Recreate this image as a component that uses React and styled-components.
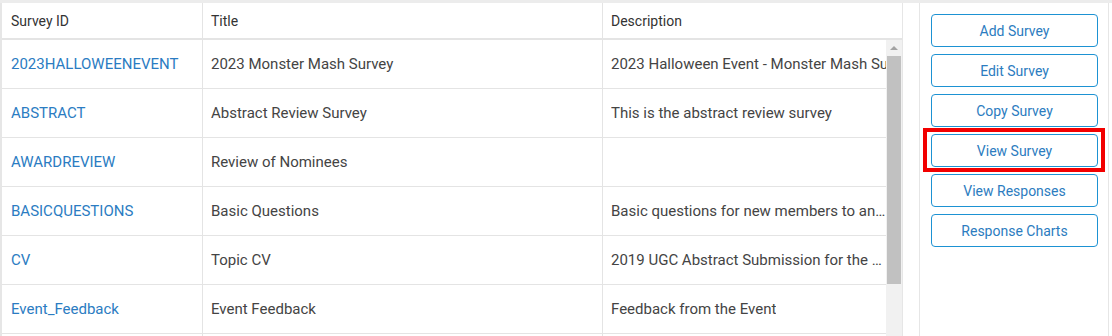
import React from "react";
import styled, { createGlobalStyle } from "styled-components";

const GlobalStyle = createGlobalStyle`
  body {
    margin: 0;
    background: #fff;
    font-family: Roboto, "Liberation Sans", sans-serif;
    font-size: 14px;
  }
`;

const Page = styled.div`
  display: flex;
  height: 336px;
  border-top: 3px solid #ececec;
  box-sizing: border-box;
  overflow: hidden;
`;

const TablePanel = styled.div`
  width: 903px;
  flex-shrink: 0;
  border-left: 2px solid #e6e6e6;
  border-right: 1px solid #e6e6e6;
  box-sizing: border-box;
  display: flex;
  flex-direction: column;
`;

const HeaderRow = styled.div`
  display: grid;
  grid-template-columns: 201px 400px 1fr;
  height: 35px;
  flex-shrink: 0;
  border-bottom: 2px solid #e4e4e4;
`;

const HeaderCell = styled.div`
  display: flex;
  align-items: center;
  padding-left: ${(p) => p.$pad || 8}px;
  color: #333;
  border-right: ${(p) => (p.$last ? "none" : "1px solid #e4e4e4")};
`;

const Body = styled.div`
  display: flex;
  flex: 1;
  min-height: 0;
`;

const Rows = styled.div`
  flex: 1;
  min-width: 0;
  overflow: hidden;
`;

const Row = styled.div`
  display: grid;
  grid-template-columns: 201px 400px 1fr;
  height: 49px;
  border-bottom: 1px solid #e4e4e4;
  box-sizing: border-box;
`;

const Cell = styled.div`
  display: flex;
  align-items: center;
  padding-left: ${(p) => p.$pad || 8}px;
  font-size: 15px;
  color: ${(p) => (p.$link ? "#2b7cc2" : "#444")};
  border-right: ${(p) => (p.$last ? "none" : "1px solid #e4e4e4")};
  min-width: 0;
`;

const Clip = styled.span`
  white-space: nowrap;
  overflow: hidden;
  text-overflow: ${(p) => (p.$cut ? "clip" : "ellipsis")};
  display: block;
`;

const Scrollbar = styled.div`
  width: 16px;
  background: #f1f1f1;
  display: flex;
  flex-direction: column;
  align-items: center;
  flex-shrink: 0;
`;

const Arrow = styled.div`
  margin-top: 6px;
  width: 0;
  height: 0;
  border-left: 4px solid transparent;
  border-right: 4px solid transparent;
  border-bottom: 4px solid #a3a3a3;
`;

const Thumb = styled.div`
  margin-top: 6px;
  width: 14px;
  height: 228px;
  background: #c1c1c1;
`;

const Gap = styled.div`
  width: 16px;
  flex-shrink: 0;
`;

const SidePanel = styled.div`
  width: 190px;
  flex-shrink: 0;
  border-left: 1px solid #e6e6e6;
  border-right: 1px solid #e6e6e6;
  box-sizing: border-box;
  padding: 11px 10px 0 11px;
  display: flex;
  flex-direction: column;
  gap: 7px;
`;

const ActionButton = styled.button`
  position: relative;
  height: 33px;
  width: 167px;
  background: #fff;
  border: 1px solid #1d92d3;
  border-radius: 4px;
  color: #2c7cc0;
  font-family: Roboto, "Liberation Sans", sans-serif;
  font-size: 14px;
  cursor: pointer;

  &::after {
    content: "";
    display: ${(p) => (p.$highlight ? "block" : "none")};
    position: absolute;
    top: -7px;
    bottom: -6px;
    left: -9px;
    right: -8px;
    border: 4px solid #f20000;
  }
`;

const surveys = [
  ["2023HALLOWEENEVENT", "2023 Monster Mash Survey", "2023 Halloween Event - Monster Mash Survey", true],
  ["ABSTRACT", "Abstract Review Survey", "This is the abstract review survey"],
  ["AWARDREVIEW", "Review of Nominees", ""],
  ["BASICQUESTIONS", "Basic Questions", "Basic questions for new members to answer"],
  ["CV", "Topic CV", "2019 UGC Abstract Submission for the Conference"],
  ["Event_Feedback", "Event Feedback", "Feedback from the Event"],
  ["FEEDBACK", "General Feedback", "General feedback"],
];

const actions = [
  "Add Survey",
  "Edit Survey",
  "Copy Survey",
  "View Survey",
  "View Responses",
  "Response Charts",
];

export default function App() {
  return (
    <>
      <GlobalStyle />
      <Page>
        <TablePanel>
          <HeaderRow>
            <HeaderCell $pad={9}>Survey ID</HeaderCell>
            <HeaderCell>Title</HeaderCell>
            <HeaderCell $last>Description</HeaderCell>
          </HeaderRow>
          <Body>
            <Rows>
              {surveys.map(([id, title, desc, cut]) => (
                <Row key={id}>
                  <Cell $pad={9} $link>{id}</Cell>
                  <Cell>{title}</Cell>
                  <Cell $last>
                    <Clip $cut={cut}>{desc}</Clip>
                  </Cell>
                </Row>
              ))}
            </Rows>
            <Scrollbar>
              <Arrow />
              <Thumb />
            </Scrollbar>
          </Body>
        </TablePanel>
        <Gap />
        <SidePanel>
          {actions.map((label) => (
            <ActionButton key={label} $highlight={label === "View Survey"}>
              {label}
            </ActionButton>
          ))}
        </SidePanel>
      </Page>
    </>
  );
}
